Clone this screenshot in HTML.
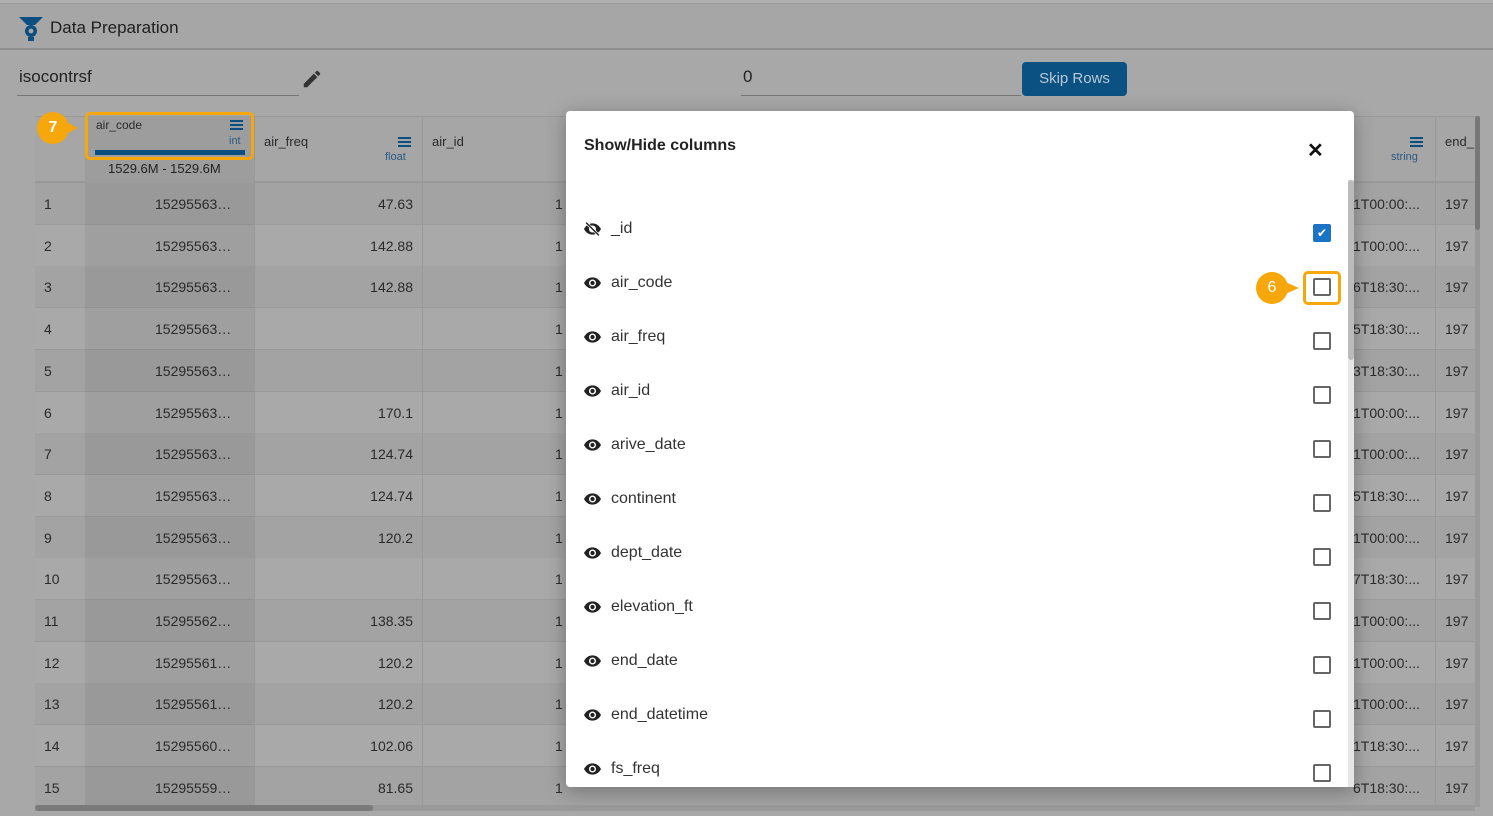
<!DOCTYPE html>
<html><head><meta charset="utf-8"><style>
*{box-sizing:border-box;margin:0;padding:0}
body{width:1493px;height:816px;overflow:hidden;background:#a8a8a8;font-family:"Liberation Sans",sans-serif;position:relative;color:#222}
.abs{position:absolute}
.row{position:absolute;left:35px;width:1440px;height:42px;border-bottom:1px solid #9a9a9a;font-size:14px;color:#2a2a2a}
.row span{position:absolute;top:13px;white-space:nowrap}
.item{position:absolute;left:584px;font-size:16px;color:#333;display:flex;align-items:center}
.item svg{margin-right:10px}
.cb{position:absolute;left:1313px;width:18px;height:18px;border:2px solid #666;border-radius:2px}
</style></head><body>
<div class="abs" style="left:0;top:0;width:1493px;height:4px;background:#b0b0b0;border-bottom:1px solid #999"></div>
<div class="abs" style="left:0;top:5px;width:1493px;height:45px;background:#a6a6a6;border-bottom:2px solid #8e8e8e"></div>
<svg class="abs" style="left:17px;top:14px" width="28" height="28" viewBox="0 0 28 28"><path d="M2 3h24l-8 8H10z" fill="#0b4e80"/><circle cx="14" cy="17" r="6" fill="#0b4e80"/><circle cx="14" cy="17" r="2.4" fill="#a6a6a6"/><rect x="11" y="23" width="6" height="4" fill="#0b4e80"/></svg>
<div class="abs" style="left:50px;top:18px;font-size:17px;color:#1e1e1e">Data Preparation</div>
<div class="abs" style="left:19px;top:67px;font-size:17px;color:#222">isocontrsf</div>
<div class="abs" style="left:17px;top:95px;width:282px;height:1px;background:#777"></div>
<svg class="abs" style="left:301px;top:68px" width="22" height="22" viewBox="0 0 24 24"><path d="M3 17.25V21h3.75L17.81 9.94l-3.75-3.75L3 17.25zM20.71 7.04a1 1 0 000-1.41l-2.34-2.34a1 1 0 00-1.41 0l-1.830 1.83 3.75 3.75 1.83-1.83z" fill="#333"/></svg>
<div class="abs" style="left:743px;top:67px;font-size:17px;color:#222">0</div>
<div class="abs" style="left:741px;top:95px;width:280px;height:1px;background:#777"></div>
<div class="abs" style="left:1022px;top:62px;width:105px;height:34px;background:#0b5283;border-radius:4px;color:#b9c8d6;font-size:15px;text-align:center;line-height:34px">Skip Rows</div>
<div class="abs" style="left:35px;top:116px;width:1440px;height:67px;background:#a6a6a6;border-bottom:2px solid #999;border-top:1px solid #999"></div>
<div class="abs" style="left:85px;top:116px;width:169px;height:691px;background:#9d9d9d"></div>
<div class="abs" style="left:96px;top:118px;font-size:12px;color:#2a2a2a">air_code</div>
<div class="abs" style="left:230px;top:120px;width:13px;height:2px;background:#0b4e80;box-shadow:0 4px #0b4e80,0 8px #0b4e80"></div>
<div class="abs" style="left:229px;top:135px;font-size:11px;color:#2b5b82">int</div>
<div class="abs" style="left:95px;top:150px;width:150px;height:5px;background:#0b4e80"></div>
<div class="abs" style="left:108px;top:161px;font-size:13px;color:#222">1529.6M - 1529.6M</div>
<div class="abs" style="left:85px;top:112px;width:169px;height:48px;border:3px solid #f5a70c;border-radius:5px"></div>
<div class="abs" style="left:37px;top:112px;width:32px;height:32px;border-radius:50%;background:#f5a70c;color:#fff;font-weight:bold;text-align:center;line-height:32px;font-size:16px">7</div>
<div class="abs" style="left:64px;top:121px;width:0;height:0;border-top:7px solid transparent;border-bottom:7px solid transparent;border-left:14px solid #f5a70c"></div>
<div class="abs" style="left:264px;top:134px;font-size:13px;color:#2a2a2a">air_freq</div>
<div class="abs" style="left:398px;top:137px;width:13px;height:2px;background:#0b4e80;box-shadow:0 4px #0b4e80,0 8px #0b4e80"></div>
<div class="abs" style="left:385px;top:151px;font-size:11px;color:#2b5b82">float</div>
<div class="abs" style="left:432px;top:134px;font-size:13px;color:#2a2a2a">air_id</div>
<div class="abs" style="left:1410px;top:137px;width:13px;height:2px;background:#0b4e80;box-shadow:0 4px #0b4e80,0 8px #0b4e80"></div>
<div class="abs" style="left:1391px;top:151px;font-size:11px;color:#2b5b82">string</div>
<div class="abs" style="left:1445px;top:134px;font-size:13px;color:#2a2a2a">end_</div>
<div id="rows"></div>
<script>
var a=["15295563…","15295563…","15295563…","15295563…","15295563…","15295563…","15295563…","15295563…","15295563…","15295563…","15295562…","15295561…","15295561…","15295560…","15295559…"];
var f=["47.63","142.88","142.88","","","170.1","124.74","124.74","120.2","","138.35","120.2","120.2","102.06","81.65"];
var r=["1T00:00:...","1T00:00:...","6T18:30:...","5T18:30:...","3T18:30:...","1T00:00:...","1T00:00:...","5T18:30:...","1T00:00:...","7T18:30:...","1T00:00:...","1T00:00:...","1T00:00:...","1T18:30:...","6T18:30:..."];
var h="";
for(var i=0;i<15;i++){var y=183+i*41.7;var bg=i%2?"#a9a9a9":"#a3a3a3";
h+='<div class="row" style="top:'+y+'px;background:'+bg+'"><span style="left:9px">'+(i+1)+'</span><div style="position:absolute;left:50px;top:0;width:169px;height:42px;background:rgba(0,0,0,.06)"></div><span style="left:120px">'+a[i]+'</span><span style="right:1062px">'+f[i]+'</span><span style="left:520px">1</span><span style="left:1318px">'+r[i]+'</span><span style="left:1410px">197</span></div>';}
document.getElementById("rows").innerHTML=h;
</script>
<div class="abs" style="left:254px;top:116px;width:1px;height:691px;background:#999"></div>
<div class="abs" style="left:422px;top:116px;width:1px;height:691px;background:#999"></div>
<div class="abs" style="left:1435px;top:116px;width:1px;height:691px;background:#999"></div>
<div class="abs" style="left:35px;top:805px;width:1440px;height:6px;background:#9a9a9a"></div>
<div class="abs" style="left:35px;top:805px;width:338px;height:6px;background:#7a7a7a;border-radius:3px"></div>
<div class="abs" style="left:1475px;top:116px;width:5px;height:691px;background:#9a9a9a"></div>
<div class="abs" style="left:1475px;top:116px;width:5px;height:114px;background:#777;border-radius:3px"></div>
<div class="abs" style="left:566px;top:111px;width:788px;height:676px;background:#fff;border-radius:4px;box-shadow:0 4px 20px rgba(0,0,0,.3)"></div>
<div class="abs" style="left:584px;top:137px;font-size:16px;font-weight:bold;color:#222">Show/Hide columns</div>
<div class="abs" style="left:1307px;top:138px;font-size:20px;font-weight:bold;color:#111">✕</div>
<div class="abs" style="left:1348px;top:180px;width:6px;height:607px;background:#e6e6e6"></div>
<div class="abs" style="left:1348px;top:180px;width:6px;height:180px;background:#bbb;border-radius:3px"></div>
<div id="items"></div>
<script>
var n=["_id","air_code","air_freq","air_id","arive_date","continent","dept_date","elevation_ft","end_date","end_datetime","fs_freq"];
var eye='<svg width="17" height="12" viewBox="0 0 24 16"><path d="M12 0C6 0 2 4 0 8c2 4 6 8 12 8s10-4 12-8C22 4 18 0 12 0zm0 13a5 5 0 110-10 5 5 0 010 10zm0-8a3 3 0 100 6 3 3 0 000-6z" fill="#222"/></svg>';
var eyeo='<svg width="17" height="14" viewBox="0 0 24 18"><path d="M12 1C6 1 2 5 0 9c2 4 6 8 12 8s10-4 12-8C22 5 18 1 12 1zm0 13a5 5 0 110-10 5 5 0 010 10z" fill="#222"/><path d="M3 0l18 18" stroke="#fff" stroke-width="4"/><path d="M3 0l18 18" stroke="#222" stroke-width="2"/></svg>';
var h2="";
for(var i=0;i<n.length;i++){var y=219+i*54;
h2+='<div class="item" style="top:'+y+'px;height:20px">'+(i?eye:eyeo)+n[i]+'</div>';
if(i==0)h2+='<div class="cb" style="top:'+(y+5)+'px;background:#1a73c4;border-color:#1a73c4;color:#fff;font-size:12px;line-height:14px;text-align:center">✔</div>';
else h2+='<div class="cb" style="top:'+(y+5)+'px"></div>';}
document.getElementById("items").innerHTML=h2;
</script>
<div class="abs" style="left:1303px;top:271px;width:38px;height:34px;border:3px solid #f5a70c;border-radius:5px"></div>
<div class="abs" style="left:1256px;top:272px;width:32px;height:32px;border-radius:50%;background:#f5a70c;color:#fff;text-align:center;line-height:32px;font-size:16px">6</div>
<div class="abs" style="left:1283px;top:281px;width:0;height:0;border-top:7px solid transparent;border-bottom:7px solid transparent;border-left:16px solid #f5a70c"></div>
</body></html>
